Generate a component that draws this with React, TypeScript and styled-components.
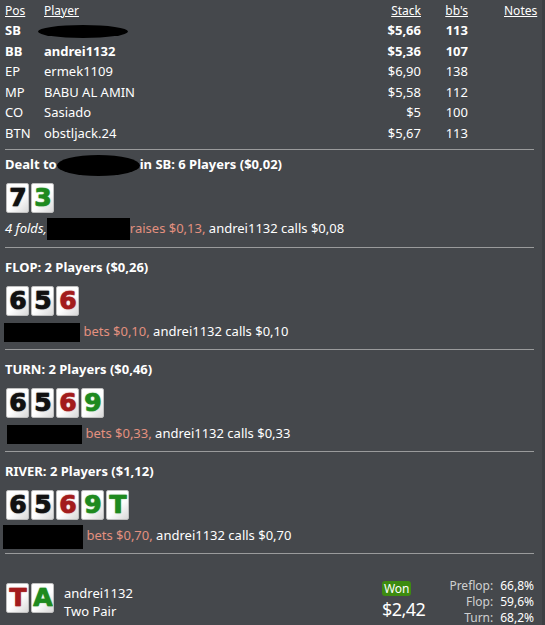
import React from "react";
import styled, { createGlobalStyle, css } from "styled-components";

const Global = createGlobalStyle`
  html, body { margin: 0; padding: 0; background: #45484c; }
  body { font-family: "Noto Sans", "Open Sans", sans-serif; font-size: 13px; color: #ffffff; }
`;

const Page = styled.div`
  width: 545px;
  height: 625px;
  overflow: hidden;
  box-sizing: border-box;
  padding: 2px 8px 0 5px;
  background: #45484c;
  border-right: 3px solid #3c3f43;
`;

const Table = styled.div`
  display: grid;
  grid-template-columns: 39px 1fr 60px 47px 66px;
  margin-bottom: 5px;
`;

const Cell = styled.div<{ $bold?: boolean; $right?: boolean; $head?: boolean }>`
  height: 20.6px;
  line-height: 20.6px;
  white-space: nowrap;
  font-weight: ${(p) => (p.$bold ? 700 : 400)};
  text-align: ${(p) => (p.$right ? "right" : "left")};
  ${(p) =>
    p.$head &&
    css`
      height: 18px;
      line-height: 18px;
      font-size: 12px;
      text-decoration: underline;
    `}
`;

const NotesHead = styled(Cell)`
  padding-left: 36px;
`;

const Redact = styled.span<{ $w: number; $h: number; $oval?: boolean; $ml?: number }>`
  display: inline-block;
  width: ${(p) => p.$w}px;
  height: ${(p) => p.$h}px;
  background: #000;
  vertical-align: middle;
  border-radius: ${(p) => (p.$oval ? "50%" : "0")};
  margin-left: ${(p) => p.$ml ?? 0}px;
`;

const Divider = styled.div`
  height: 1px;
  background: #9a9b9c;
`;

const Section = styled.section<{ $first?: boolean }>`
  padding: ${(p) => (p.$first ? "4px 0 9px" : "9px 0 8px")};
`;

const Heading = styled.div`
  font-weight: 700;
  line-height: 20px;
  height: 20px;
  white-space: nowrap;
`;

const Cards = styled.div`
  display: flex;
  gap: 2px;
  margin: 9px 0 5px 1px;
`;

const CardBox = styled.div<{ $c: string }>`
  width: 23px;
  height: 30px;
  box-sizing: border-box;
  border: 1px solid #bfbfbf;
  border-radius: 2px;
  background: linear-gradient(135deg, #ffffff 0%, #ffffff 55%, #d8d8d8 100%);
  color: ${(p) => p.$c};
  font-family: "DejaVu Sans", sans-serif;
  font-weight: 700;
  font-size: 25px;
  line-height: 28px;
  text-align: center;
  letter-spacing: -1px;
  -webkit-text-stroke: 0.7px ${(p) => p.$c};
  text-shadow: 0 0 1.5px ${(p) => p.$c};
  overflow: hidden;
`;

const Action = styled.div`
  line-height: 20px;
  height: 20px;
  white-space: nowrap;
`;

const Fold = styled.span`
  font-style: italic;
`;

const Aggro = styled.span`
  color: #e3907f;
`;

const Result = styled.div`
  display: flex;
  align-items: flex-start;
  padding-top: 20px;
`;

const HandCol = styled.div`
  margin-left: 10px;
  padding-top: 10px;
  line-height: 18px;
`;

const WonCol = styled.div`
  margin-left: auto;
  margin-right: 2px;
  padding-top: 7px;
  display: flex;
  flex-direction: column;
  align-items: flex-start;
`;

const Badge = styled.span`
  background: #3d8b10;
  color: #fff;
  border-radius: 3px;
  padding: 0 2px;
  font-size: 12px;
  line-height: 15px;
  height: 15px;
`;

const Amount = styled.div`
  font-size: 18px;
  line-height: 22px;
  margin-top: 2px;
  letter-spacing: -0.5px;
`;

const Stats = styled.div`
  display: grid;
  grid-template-columns: auto auto;
  column-gap: 7px;
  margin-left: 22px;
  padding-top: 4px;
  font-size: 12px;
  line-height: 16px;
`;

const StatLabel = styled.span`
  text-align: right;
  color: #cfd0d1;
`;

const StatValue = styled.span`
  color: #ffffff;
`;

const BLACK = "#111111";
const RED = "#a31c1c";
const GREEN = "#1e8a1e";

function Card({ v, c }: { v: string; c: string }) {
  return <CardBox $c={c}>{v}</CardBox>;
}

const players = [
  { pos: "SB", name: null, stack: "$5,66", bb: "113", bold: true },
  { pos: "BB", name: "andrei1132", stack: "$5,36", bb: "107", bold: true },
  { pos: "EP", name: "ermek1109", stack: "$6,90", bb: "138" },
  { pos: "MP", name: "BABU AL AMIN", stack: "$5,58", bb: "112" },
  { pos: "CO", name: "Sasiado", stack: "$5", bb: "100" },
  { pos: "BTN", name: "obstljack.24", stack: "$5,67", bb: "113" },
];

export default function App() {
  return (
    <Page>
      <Global />
      <Table>
        <Cell $head>Pos</Cell>
        <Cell $head>Player</Cell>
        <Cell $head $right>Stack</Cell>
        <Cell $head $right>bb's</Cell>
        <NotesHead $head>Notes</NotesHead>
        {players.map((p) => (
          <React.Fragment key={p.pos}>
            <Cell $bold={p.bold}>{p.pos}</Cell>
            <Cell $bold={p.bold}>
              {p.name ?? <Redact $w={90} $h={13} $oval $ml={-6} />}
            </Cell>
            <Cell $bold={p.bold} $right>{p.stack}</Cell>
            <Cell $bold={p.bold} $right>{p.bb}</Cell>
            <Cell />
          </React.Fragment>
        ))}
      </Table>

      <Divider />
      <Section $first>
        <Heading>
          Dealt to<Redact $w={83} $h={21} $oval />in SB: 6 Players ($0,02)
        </Heading>
        <Cards>
          <Card v="7" c={BLACK} />
          <Card v="3" c={GREEN} />
        </Cards>
        <Action>
          <Fold>4 folds,</Fold>
          <Redact $w={83} $h={22} />
          <Aggro>raises $0,13,</Aggro> andrei1132 calls $0,08
        </Action>
      </Section>

      <Divider />
      <Section>
        <Heading>FLOP: 2 Players ($0,26)</Heading>
        <Cards>
          <Card v="6" c={BLACK} />
          <Card v="5" c={BLACK} />
          <Card v="6" c={RED} />
        </Cards>
        <Action>
          <Redact $w={76} $h={19} $ml={-1} /> <Aggro>bets $0,10,</Aggro> andrei1132 calls $0,10
        </Action>
      </Section>

      <Divider />
      <Section>
        <Heading>TURN: 2 Players ($0,46)</Heading>
        <Cards>
          <Card v="6" c={BLACK} />
          <Card v="5" c={BLACK} />
          <Card v="6" c={RED} />
          <Card v="9" c={GREEN} />
        </Cards>
        <Action>
          <Redact $w={75} $h={19} $ml={2} /> <Aggro>bets $0,33,</Aggro> andrei1132 calls $0,33
        </Action>
      </Section>

      <Divider />
      <Section>
        <Heading>RIVER: 2 Players ($1,12)</Heading>
        <Cards>
          <Card v="6" c={BLACK} />
          <Card v="5" c={BLACK} />
          <Card v="6" c={RED} />
          <Card v="9" c={GREEN} />
          <Card v="T" c={GREEN} />
        </Cards>
        <Action>
          <Redact $w={80} $h={24} $ml={-2} /> <Aggro>bets $0,70,</Aggro> andrei1132 calls $0,70
        </Action>
      </Section>

      <Divider />
      <Result>
        <Cards>
          <Card v="T" c={RED} />
          <Card v="A" c={GREEN} />
        </Cards>
        <HandCol>
          <div>andrei1132</div>
          <div>Two Pair</div>
        </HandCol>
        <WonCol>
          <Badge>Won</Badge>
          <Amount>$2,42</Amount>
        </WonCol>
        <Stats>
          <StatLabel>Preflop:</StatLabel>
          <StatValue>66,8%</StatValue>
          <StatLabel>Flop:</StatLabel>
          <StatValue>59,6%</StatValue>
          <StatLabel>Turn:</StatLabel>
          <StatValue>68,2%</StatValue>
        </Stats>
      </Result>
    </Page>
  );
}
